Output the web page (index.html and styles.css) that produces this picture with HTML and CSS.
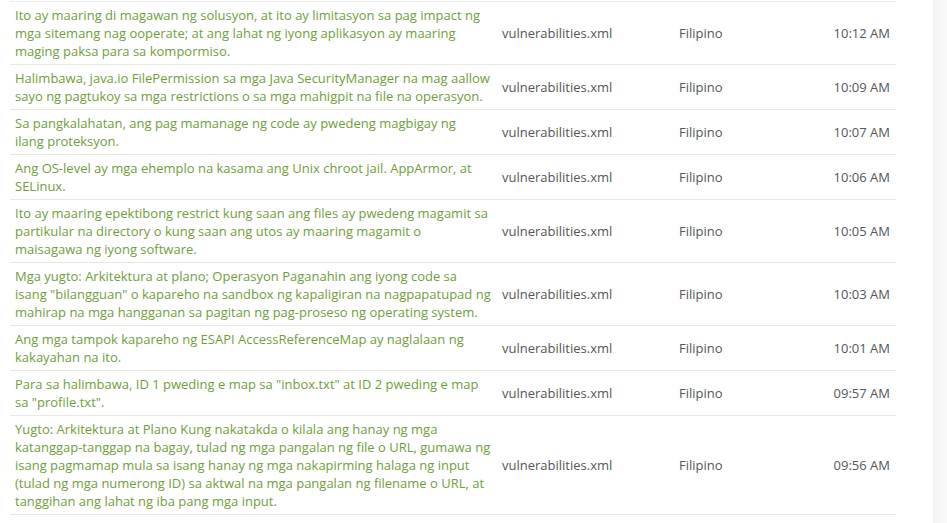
FILE: index.html
```html
<!DOCTYPE html>
<html lang="en">
<head>
  <meta charset="UTF-8">
  <title>Translations</title>
  <link rel="stylesheet" href="styles.css">
</head>
<body>
  <div class="page">
    <div class="content">
      <table class="log">
        <colgroup>
          <col class="c-text">
          <col class="c-file">
          <col class="c-lang">
          <col class="c-time">
        </colgroup>
        <tbody>
          <tr>
            <td class="text">Ito ay maaring di magawan ng solusyon, at ito ay limitasyon sa pag impact ng mga sitemang nag ooperate; at ang lahat ng iyong aplikasyon ay maaring maging paksa para sa kompormiso.</td>
            <td>vulnerabilities.xml</td>
            <td>Filipino</td>
            <td class="time">10:12 AM</td>
          </tr>
          <tr>
            <td class="text">Halimbawa, java.io FilePermission sa mga Java SecurityManager na mag aallow sayo ng pagtukoy sa mga restrictions o sa mga mahigpit na file na operasyon.</td>
            <td>vulnerabilities.xml</td>
            <td>Filipino</td>
            <td class="time">10:09 AM</td>
          </tr>
          <tr>
            <td class="text">Sa pangkalahatan, ang pag mamanage ng code ay pwedeng magbigay ng ilang&nbsp;proteksyon.</td>
            <td>vulnerabilities.xml</td>
            <td>Filipino</td>
            <td class="time">10:07 AM</td>
          </tr>
          <tr>
            <td class="text">Ang OS-level ay mga ehemplo na kasama ang Unix chroot jail. AppArmor, at SELinux.</td>
            <td>vulnerabilities.xml</td>
            <td>Filipino</td>
            <td class="time">10:06 AM</td>
          </tr>
          <tr>
            <td class="text">Ito ay maaring epektibong restrict kung saan ang files ay pwedeng magamit sa partikular na directory o kung saan ang utos ay maaring magamit o maisagawa&nbsp;ng iyong software.</td>
            <td>vulnerabilities.xml</td>
            <td>Filipino</td>
            <td class="time">10:05 AM</td>
          </tr>
          <tr>
            <td class="text">Mga yugto: Arkitektura at plano; Operasyon Paganahin ang iyong code sa isang "bilangguan" o kapareho na sandbox ng kapaligiran na nagpapatupad ng mahirap na mga hangganan sa pagitan ng pag-proseso ng operating system.</td>
            <td>vulnerabilities.xml</td>
            <td>Filipino</td>
            <td class="time">10:03 AM</td>
          </tr>
          <tr>
            <td class="text">Ang mga tampok kapareho ng ESAPI AccessReferenceMap ay naglalaan ng kakayahan na ito.</td>
            <td>vulnerabilities.xml</td>
            <td>Filipino</td>
            <td class="time">10:01 AM</td>
          </tr>
          <tr>
            <td class="text">Para sa halimbawa, ID 1 pweding e map sa "inbox.txt" at ID 2 pweding e map sa "profile.txt".</td>
            <td>vulnerabilities.xml</td>
            <td>Filipino</td>
            <td class="time">09:57 AM</td>
          </tr>
          <tr>
            <td class="text">Yugto: Arkitektura at Plano Kung nakatakda o kilala ang hanay ng mga katanggap-tanggap na bagay, tulad ng mga pangalan ng file o URL, gumawa ng isang pagmamap mula sa isang hanay ng mga nakapirming halaga ng input (tulad ng mga numerong ID) sa aktwal na mga pangalan ng filename o URL, at tanggihan ang lahat ng iba pang mga input.</td>
            <td>vulnerabilities.xml</td>
            <td>Filipino</td>
            <td class="time">09:56 AM</td>
          </tr>
        </tbody>
      </table>
    </div>
    <div class="sidebar"></div>
  </div>
</body>
</html>
```

FILE: styles.css
```css
html, body {
  margin: 0;
  padding: 0;
  height: 100%;
}

body {
  font-family: "Open Sans", sans-serif;
  font-size: 13px;
  color: #555555;
  background-color: #ffffff;
}

.page {
  display: flex;
  height: 100%;
}

.content {
  width: 933px;
  padding: 0 37px 0 10px;
  box-sizing: border-box;
}

.sidebar {
  flex: 1;
  background: linear-gradient(to right, #f3f3f3, #fafafa);
}

.log {
  width: 886px;
  border-collapse: collapse;
  table-layout: fixed;
  margin-top: 1px;
  border-top: 1px solid #ececec;
}

.c-text { width: 487px; }
.c-file { width: 177px; }
.c-lang { width: 120px; }

.log td {
  padding: 4px 5px;
  line-height: 18px;
  vertical-align: middle;
  border-bottom: 1px solid #e8e8e3;
}

.log td.text {
  color: #6f9e3a;
}

.log td.time {
  text-align: right;
  padding-right: 6px;
}
```
